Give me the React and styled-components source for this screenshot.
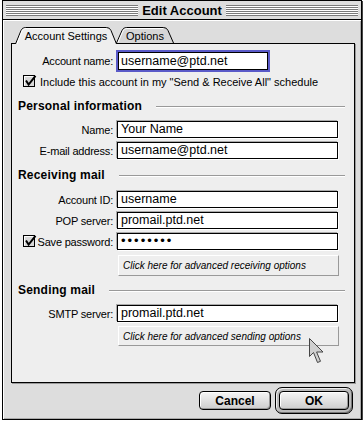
import styled, { createGlobalStyle } from "styled-components"

const GlobalStyle = createGlobalStyle`
    body {
        margin: 0;
        background: #fff;
        font-family: "Liberation Sans", Arial, sans-serif;
        color: #000;
    }
`;

const Window = styled.div`
    position: relative;
    margin-left: 2px;
    width: 360px;
    height: 420px;
    box-sizing: border-box;
    border: 1px solid #000;
    box-shadow: 1px 1px 0 #444;
    background: #ddd;
    display: flex;
    flex-direction: column;
`;
const TitleBar = styled.div`
    height: 19px;
    box-sizing: border-box;
    border-bottom: 1px solid #000;
    display: flex;
    align-items: center;
    gap: 4px;
    padding: 0 3px;
    background: #ddd;
`;
const Stripes = styled.div`
    flex: 1;
    height: 11px;
    background: repeating-linear-gradient(to bottom, #7a7a7a 0 1px, #fff 1px 2px);
`;
const Title = styled.span`
    font-weight: bold;
    font-size: 13px;
    white-space: nowrap;
`;
const Body = styled.div`
    flex: 1;
    padding: 7px 6px 0 8px;
    box-shadow: inset 1px 1px 0 #fff, inset -1px -1px 0 #aaa;
    display: flex;
    flex-direction: column;
`;
const TabRow = styled.div`
    display: flex;
    height: 17px;
    padding-left: 4px;
    margin-bottom: -1px;
    position: relative;
    z-index: 1;
`;
const Tab = styled.div`
    position: relative;
    width: ${p => p.$w}px;
    height: 17px;
    margin-left: ${p => p.$ml || 0}px;
    z-index: ${p => (p.$active ? 2 : 1)};
    display: flex;
    align-items: center;
    justify-content: center;
    font-size: 11px;
    white-space: nowrap;
`;
const TabBg = styled.svg`
    position: absolute;
    left: 0;
    top: 0;
`;
const TabText = styled.span`
    position: relative;
    padding-top: 1px;
`;
const Panel = styled.div`
    box-sizing: border-box;
    height: 340px;
    border: 1px solid #000;
    background: #eee;
    box-shadow: 1px 1px 0 #999;
    padding-top: 6px;
    display: flex;
    flex-direction: column;
`;
const Row = styled.div`
    display: grid;
    grid-template-columns: 101px auto;
    column-gap: 4px;
    align-items: center;
    margin-top: ${p => p.$mt || 0}px;
`;
const Label = styled.div`
    font-size: 11px;
    letter-spacing: -0.2px;
    text-align: right;
    white-space: nowrap;
`;
const CheckLabel = styled(Label)`
    display: flex;
    justify-content: space-between;
    align-items: center;
    padding-left: 11px;
`;
const Field = styled.div`
    box-sizing: border-box;
    width: ${p => p.$w}px;
    height: 17px;
    border: 1px solid #000;
    background: #fff;
    box-shadow: -1px -1px 0 #aaa, 1px 1px 0 #fff;
    font-size: 12.5px;
    line-height: 15px;
    padding-left: 3px;
    white-space: nowrap;
    overflow: hidden;
`;
const FocusField = styled(Field)`
    height: 22px;
    margin-left: -1px;
    border: 2px solid #5a5ac8;
    box-shadow: inset 0 0 0 1px #000;
    line-height: 18px;
    padding-left: 3px;
`;
const Dots = styled.span`
    font-size: 13px;
    letter-spacing: 2px;
    position: relative;
    top: -1px;
`;
const CheckRow = styled.div`
    display: flex;
    align-items: center;
    gap: 3px;
    height: 13px;
    padding-left: 11px;
    margin-top: ${p => p.$mt}px;
    font-size: 11px;
    white-space: nowrap;
`;
const Box = styled.svg`
    flex: none;
`;
const Section = styled.div`
    display: flex;
    align-items: center;
    height: 14px;
    padding: 0 9px 0 6px;
    margin-top: ${p => p.$mt}px;
`;
const SectionTitle = styled.span`
    font-weight: bold;
    font-size: 12px;
    letter-spacing: 0.2px;
    margin-right: 14px;
    white-space: nowrap;
`;
const Rule = styled.span`
    flex: 1;
    border-top: 1px solid #999;
    border-bottom: 1px solid #fff;
    margin-top: 2px;
`;
const AdvButton = styled.button`
    align-self: flex-start;
    box-sizing: border-box;
    margin: ${p => p.$mt}px 0 0 106px;
    width: 221px;
    height: ${p => p.$h}px;
    padding: 0 0 0 4px;
    background: #eee;
    border: 1px solid;
    border-color: #fff #999 #999 #fff;
    font-family: "Liberation Sans", Arial, sans-serif;
    font-style: italic;
    font-size: 10px;
    text-align: left;
    color: #000;
    white-space: nowrap;
`;
const ButtonRow = styled.div`
    display: flex;
    justify-content: flex-end;
    align-items: center;
    gap: 4px;
    margin-top: 4px;
    padding-right: 2px;
    height: 27px;
`;
const PushButton = styled.button`
    box-sizing: border-box;
    width: ${p => p.$w}px;
    height: 19px;
    border: 1px solid #000;
    border-radius: 4px;
    background: linear-gradient(#f6f6f6, #cdcdcd);
    box-shadow: inset 1px 1px 0 #fff, inset -1px -1px 0 #999;
    font-family: "Liberation Sans", Arial, sans-serif;
    font-weight: bold;
    font-size: 12px;
    color: #000;
    padding: 0;
`;
const DefaultRing = styled.div`
    box-sizing: border-box;
    width: 78px;
    height: 27px;
    border: 1px solid #000;
    border-radius: 7px;
    background: #bbb;
    box-shadow: inset 1px 1px 0 #eee, inset -1px -1px 0 #777;
    padding: 3px;
    display: flex;
`;
const Pointer = styled.svg`
    position: absolute;
    left: 305px;
    top: 336px;
`;

const tabPath = (w, h) =>
    `M0.5,${h} L6,3.5 Q7.2,0.5 10.5,0.5 H${w - 10.5} Q${w - 7.2},0.5 ${w - 6},3.5 L${w - 0.5},${h}`;

const TabItem = ({ w, ml, active, children }) => (
    <Tab $w={w} $ml={ml} $active={active}>
        <TabBg width={w} height="17" viewBox={`0 0 ${w} 17`}>
            <path d={tabPath(w, active ? 17 : 16)} fill={active ? "#eee" : "#d6d6d6"} stroke="#000" />
            <path d={`M2,${active ? 17 : 15.5} L7,4 Q8,1.5 10.5,1.5 H${w - 11}`} fill="none" stroke="#fff" />
        </TabBg>
        <TabText>{children}</TabText>
    </Tab>
);

const CheckBox = () => (
    <Box width="14" height="13" viewBox="0 0 14 13">
        <rect x="0.5" y="0.5" width="11" height="11" fill="#d8d8d8" stroke="#000" />
        <path d="M1.5 10.5V1.5H10.5" stroke="#fff" fill="none" />
        <path d="M3 5.5 L5.6 9.5 L12.5 0.8" stroke="#000" strokeWidth="2" fill="none" />
    </Box>
);

const App = () => {
    return (
        <>
            <GlobalStyle />
            <Window>
                <TitleBar>
                    <Stripes />
                    <Title>Edit Account</Title>
                    <Stripes />
                </TitleBar>
                <Body>
                    <TabRow>
                        <TabItem w={102} active>Account Settings</TabItem>
                        <TabItem w={58} ml={-1}>Options</TabItem>
                    </TabRow>
                    <Panel>
                        <Row>
                            <Label>Account name:</Label>
                            <FocusField $w={154}>username@ptd.net</FocusField>
                        </Row>
                        <CheckRow $mt={3}>
                            <CheckBox />
                            Include this account in my "Send &amp; Receive All" schedule
                        </CheckRow>

                        <Section $mt={11}>
                            <SectionTitle>Personal information</SectionTitle>
                            <Rule />
                        </Section>
                        <Row $mt={8}>
                            <Label>Name:</Label>
                            <Field $w={221}>Your Name</Field>
                        </Row>
                        <Row $mt={4}>
                            <Label>E-mail address:</Label>
                            <Field $w={221}>username@ptd.net</Field>
                        </Row>

                        <Section $mt={9}>
                            <SectionTitle>Receiving mail</SectionTitle>
                            <Rule />
                        </Section>
                        <Row $mt={9}>
                            <Label>Account ID:</Label>
                            <Field $w={221}>username</Field>
                        </Row>
                        <Row $mt={4}>
                            <Label>POP server:</Label>
                            <Field $w={221}>promail.ptd.net</Field>
                        </Row>
                        <Row $mt={4}>
                            <CheckLabel>
                                <CheckBox />
                                <span>Save password:</span>
                            </CheckLabel>
                            <Field $w={221}><Dots>••••••••</Dots></Field>
                        </Row>
                        <AdvButton $mt={5} $h={21}>Click here for advanced receiving options</AdvButton>

                        <Section $mt={7}>
                            <SectionTitle>Sending mail</SectionTitle>
                            <Rule />
                        </Section>
                        <Row $mt={8}>
                            <Label>SMTP server:</Label>
                            <Field $w={221}>promail.ptd.net</Field>
                        </Row>
                        <AdvButton $mt={4} $h={20}>Click here for advanced sending options</AdvButton>
                    </Panel>
                    <ButtonRow>
                        <PushButton $w={72}>Cancel</PushButton>
                        <DefaultRing>
                            <PushButton $w={70}>OK</PushButton>
                        </DefaultRing>
                    </ButtonRow>
                </Body>
                <Pointer width="17" height="28" viewBox="0 0 17 28">
                    <path d="M1.5 1.5 V19.5 L5.5 15.5 L9.5 25.5 L12.5 24.3 L8.6 15 L15 15 Z" fill="#cfcfcf" stroke="#444" strokeLinejoin="round" />
                </Pointer>
            </Window>
        </>
    )
}
export default App
